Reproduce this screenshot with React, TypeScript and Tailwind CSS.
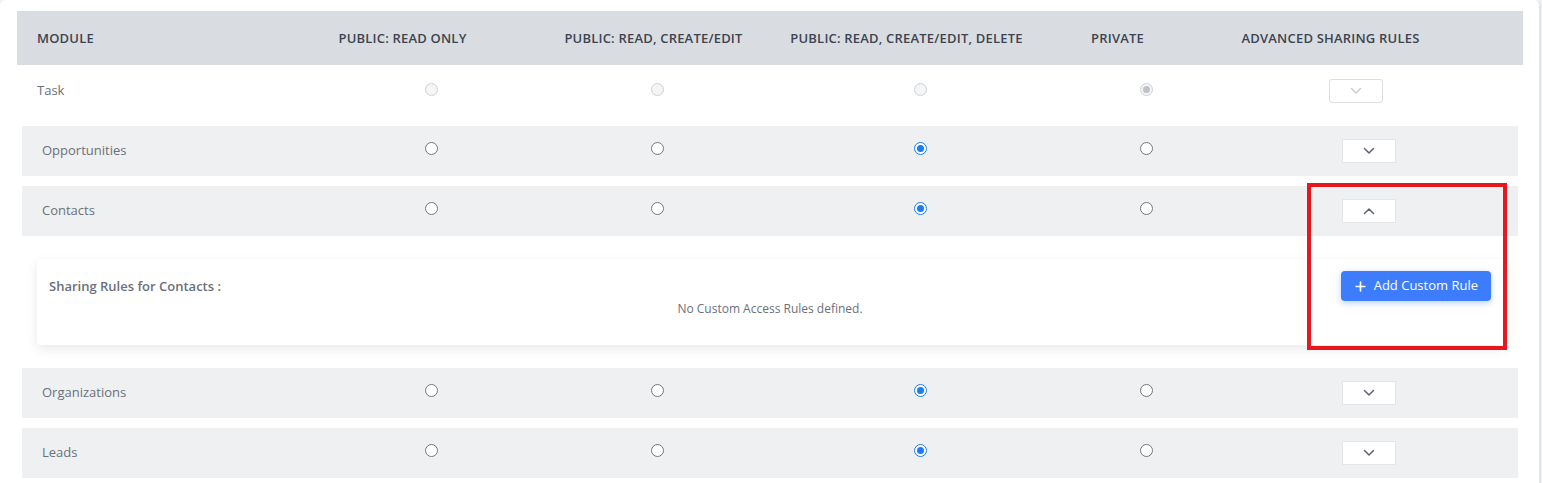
import { Plus } from "lucide-react";

type Access = 0 | 1 | 2 | 3;

const modules: { name: string; access: Access; open?: boolean }[] = [
  { name: "Opportunities", access: 2 },
  { name: "Contacts", access: 2, open: true },
  { name: "Organizations", access: 2 },
  { name: "Leads", access: 2 },
];

const headers = [
  "Public: Read Only",
  "Public: Read, Create/Edit",
  "Public: Read, Create/Edit, Delete",
  "Private",
  "Advanced Sharing Rules",
];

function Chevron({ up, light }: { up?: boolean; light?: boolean }) {
  return (
    <svg width="12" height="8" viewBox="0 0 12 8" fill="none">
      <path
        d={up ? "M1.5 6.5L6 2L10.5 6.5" : "M1.5 1.5L6 6L10.5 1.5"}
        stroke={light ? "#c9ccd1" : "#5c6370"}
        strokeWidth="1.5"
        strokeLinecap="round"
        strokeLinejoin="round"
      />
    </svg>
  );
}

function Radio({ checked, disabled }: { checked?: boolean; disabled?: boolean }) {
  if (disabled) {
    return (
      <span className="flex h-[13px] w-[13px] items-center justify-center rounded-full border border-[#cfd1d4] bg-[#f4f5f6]">
        {checked && <span className="h-[7px] w-[7px] rounded-full bg-[#bfc2c6]" />}
      </span>
    );
  }
  if (checked) {
    return (
      <span className="flex h-[13px] w-[13px] items-center justify-center rounded-full border-[1.5px] border-[#1b7cf6] bg-white">
        <span className="h-[7px] w-[7px] rounded-full bg-[#1b7cf6]" />
      </span>
    );
  }
  return <span className="block h-[13px] w-[13px] rounded-full border border-[#74787e] bg-white" />;
}

function ModuleRow({ name, access, open }: { name: string; access: Access; open?: boolean }) {
  return (
    <div className="grid h-[50px] grid-cols-[296px_226px_226px_300px_152px_294px] items-center bg-[#eff0f2]">
      <span className="pl-5 text-[13px] text-[#6b7079]">{name}</span>
      {[0, 1, 2, 3].map((i) => (
        <div key={i} className="mb-[5px] flex justify-center">
          <Radio checked={access === i} />
        </div>
      ))}
      <div className="flex justify-center">
        <button className="flex h-[24px] w-[54px] items-center justify-center border border-[#e3e5e8] bg-white">
          <Chevron up={open} />
        </button>
      </div>
    </div>
  );
}

function RulesPanel({ name }: { name: string }) {
  return (
    <div className="pb-[13px] pl-[15px] pr-[12px] pt-[13px]">
      <div className="h-[86px] rounded bg-white pb-3 pl-3 pr-[15px] pt-3 shadow-[0_4px_12px_rgba(0,0,0,0.09)]">
        <div className="flex h-[30px] items-center justify-between">
          <span className="mt-px text-[13px] font-semibold text-[#6b7079]">Sharing Rules for {name} :</span>
          <button className="flex h-[30px] items-center gap-[6px] rounded bg-[#3d7cfc] pl-[12px] pr-[13px] text-[13px] font-medium text-white shadow-[0_2px_6px_rgba(61,124,252,0.35)]">
            <Plus size={15} strokeWidth={2.6} />
            Add Custom Rule
          </button>
        </div>
        <p className="text-center text-[12px] leading-[16px] text-[#6b7079]">
          No Custom Access Rules defined.
        </p>
      </div>
    </div>
  );
}

export default function App() {
  return (
    <div className="min-h-screen bg-[#eef0f3] font-['Open_Sans',sans-serif]">
      <div className="relative w-[1541px] rounded-t-md border-r-2 border-[#e4e5ea] bg-white pb-10 pl-[17px] pr-[16px] pt-[11px]">
        {/* Header */}
        <div className="grid h-[54px] grid-cols-[260px_251px_251px_255px_167px_259px_1fr] items-center bg-[#d9dde1] pt-[2px] text-[13px] font-semibold uppercase tracking-[0.2px] text-[#3d4450]">
          <span className="pl-5">Module</span>
          {headers.map((h) => (
            <span key={h} className="text-center">
              {h}
            </span>
          ))}
          <span />
        </div>

        {/* Task row (locked) */}
        <div className="mb-[10px] grid h-[51px] grid-cols-[301px_226px_226px_300px_152px_268px] items-center">
          <span className="pl-5 text-[13px] text-[#6b7079]">Task</span>
          {[0, 1, 2, 3].map((i) => (
            <div key={i} className="mb-[2px] flex justify-center">
              <Radio disabled checked={i === 3} />
            </div>
          ))}
          <div className="flex justify-center">
            <button className="flex h-[24px] w-[54px] items-center justify-center rounded-[3px] border border-[#dcdee1] bg-white">
              <Chevron light />
            </button>
          </div>
        </div>

        {/* Module rows */}
        <div className="flex flex-col gap-[10px] pl-[5px] pr-[5px]">
          {modules.map((m) => (
            <div key={m.name} className="flex flex-col">
              <ModuleRow {...m} />
              {m.open && (
                <div className="mt-[10px]">
                  <RulesPanel name={m.name} />
                </div>
              )}
            </div>
          ))}
        </div>

        {/* highlight annotation */}
        <div className="pointer-events-none absolute left-[1307px] top-[183px] h-[167px] w-[200px] border-4 border-[#e8161f]" />
      </div>
    </div>
  );
}
